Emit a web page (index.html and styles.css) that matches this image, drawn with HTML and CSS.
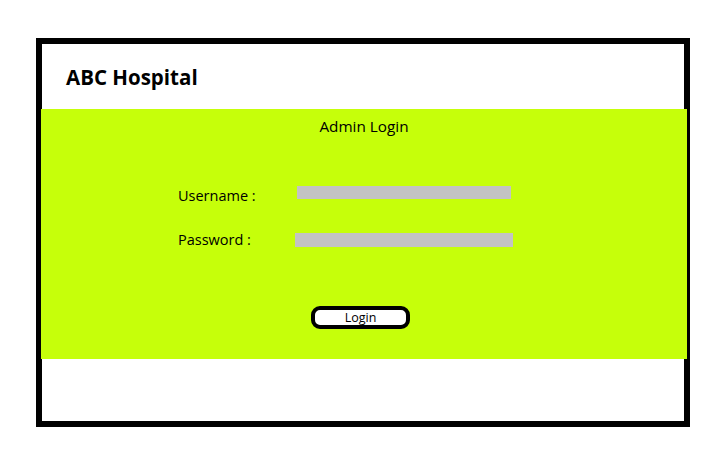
FILE: index.html
```html
<!DOCTYPE html>
<html>
<head>
<meta charset="utf-8">
<link rel="stylesheet" href="styles.css">
</head>
<body>
<div class="frame">
  <header class="header"><h1 class="title">ABC Hospital</h1></header>
  <section class="panel">
    <div class="panel-title">Admin Login</div>
    <div class="row row-user">
      <label class="label label-user">Username :</label>
      <div class="input input-user"></div>
    </div>
    <div class="row row-pass">
      <label class="label label-pass">Password :</label>
      <div class="input input-pass"></div>
    </div>
    <button class="btn">Login</button>
  </section>
</div>
</body>
</html>
```
FILE: styles.css
```css
html, body { margin: 0; padding: 0; background: #fff; }
body { font-family: "Open Sans", "Noto Sans", sans-serif; color: #000; }
.frame {
  margin: 38px 0 0 36px;
  width: 642px;
  height: 377px;
  border: 6px solid #000;
  display: flex;
  flex-direction: column;
}
.header {
  height: 65px;
  display: flex;
  align-items: center;
  padding-left: 24px;
}
.title { margin: 0; font-size: 20.5px; font-weight: 700; line-height: 24px; }
.panel {
  height: 250px;
  margin: 0 -3px 0 -1px;
  background: #c6ff0a;
  display: flex;
  flex-direction: column;
  box-sizing: border-box;
  padding-top: 7px;
}
.panel-title { text-align: center; font-size: 15.3px; line-height: 20px; }
.row { display: flex; align-items: flex-start; padding-left: 137px; }
.row-user { margin-top: 50px; }
.row-pass { margin-top: 24px; }
.label { font-size: 14.5px; line-height: 20px; }
.label-user { width: 119px; }
.label-pass { width: 117px; }
.input { background: #c3c3c3; }
.input-user { width: 214px; height: 13px; margin-top: 0; }
.input-pass { width: 218px; height: 14px; margin-top: 3px; }
.btn {
  margin: 56px 0 0 270px;
  width: 99px;
  height: 23px;
  box-sizing: border-box;
  border: 4px solid #000;
  border-radius: 9px;
  background: #fff;
  font-family: inherit;
  font-size: 12.5px;
  line-height: 13px;
  padding: 0;
  color: #000;
}
```
